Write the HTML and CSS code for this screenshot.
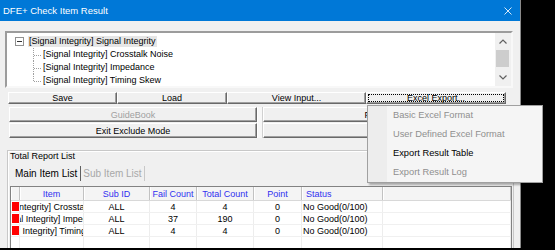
FILE: index.html
```html
<!DOCTYPE html>
<html lang="en">
<head>
  <meta charset="UTF-8" />
  <title>DFE+ Check Item Result</title>
  <link rel="stylesheet" href="styles.css">
</head>
<body>
  <div class="screen">
    <div class="window">
      <div class="titlebar">
        <span>DFE+ Check Item Result</span>
        <svg class="close" width="8" height="8" viewBox="0 0 8 8"><path d="M0.5 0.5L7.5 7.5M7.5 0.5L0.5 7.5" stroke="#d6e8f7" stroke-width="1" /></svg>
      </div>
      <div class="client">
        <div class="tree">
          <ul class="tree-list">
            <li class="root"><span class="expander"></span><span class="node selected">[Signal Integrity] Signal Integrity</span></li>
            <li>
              <ul class="children">
                <li class="child"><span class="node">[Signal Integrity] Crosstalk Noise</span></li>
                <li class="child"><span class="node">[Signal Integrity] Impedance</span></li>
                <li class="child"><span class="node">[Signal Integrity] Timing Skew</span></li>
              </ul>
            </li>
          </ul>
          <div class="scrollbar">
            <div class="arrow"><svg width="8" height="5" viewBox="0 0 8 5"><path d="M0.5 4.5L4 1L7.5 4.5" fill="none" stroke="#606060" stroke-width="1.2" /></svg></div>
            <div class="thumb"></div>
            <div class="track"></div>
            <div class="arrow"><svg width="8" height="5" viewBox="0 0 8 5"><path d="M0.5 0.5L4 4L7.5 0.5" fill="none" stroke="#606060" stroke-width="1.2" /></svg></div>
          </div>
        </div>

        <div class="toolbar">
          <button class="btn">Save</button>
          <button class="btn">Load</button>
          <button class="btn">View Input...</button>
          <button class="btn focused">Excel Export...</button>
        </div>

        <div class="actions">
          <button class="btn disabled">GuideBook</button>
          <div class="splitter"></div>
          <button class="btn">Preview...</button>
          <button class="btn">Exit Exclude Mode</button>
          <button class="btn"></button>
        </div>

        <div class="group">
          <div class="group-label">Total Report List</div>
          <div class="tabs">
            <span class="tab active">Main Item List</span>
            <span class="tab disabled">Sub Item List</span>
          </div>
          <div class="grid">
            <div class="grid-row head">
              <div class="cell"></div>
              <div class="cell">Item</div>
              <div class="cell">Sub ID</div>
              <div class="cell">Fail Count</div>
              <div class="cell">Total Count</div>
              <div class="cell">Point</div>
              <div class="cell left">Status</div>
              <div class="cell"></div>
            </div>
            <div class="grid-row">
              <div class="cell"><span class="mark"></span></div>
              <div class="cell clip"><span>[Signal Integrity] Crosstalk Noise</span></div>
              <div class="cell">ALL</div>
              <div class="cell">4</div>
              <div class="cell">4</div>
              <div class="cell">0</div>
              <div class="cell left">No Good(0/100)</div>
              <div class="cell"></div>
            </div>
            <div class="grid-row">
              <div class="cell"><span class="mark"></span></div>
              <div class="cell clip"><span>[Signal Integrity] Impedance</span></div>
              <div class="cell">ALL</div>
              <div class="cell">37</div>
              <div class="cell">190</div>
              <div class="cell">0</div>
              <div class="cell left">No Good(0/100)</div>
              <div class="cell"></div>
            </div>
            <div class="grid-row">
              <div class="cell"><span class="mark"></span></div>
              <div class="cell clip"><span>[Signal Integrity] Timing Skew</span></div>
              <div class="cell">ALL</div>
              <div class="cell">4</div>
              <div class="cell">4</div>
              <div class="cell">0</div>
              <div class="cell left">No Good(0/100)</div>
              <div class="cell"></div>
            </div>
            <div class="grid-row empty">
              <div class="cell"></div><div class="cell"></div><div class="cell"></div><div class="cell"></div>
              <div class="cell"></div><div class="cell"></div><div class="cell"></div><div class="cell"></div>
            </div>
          </div>
        </div>
      </div>
    </div>

    <div class="menu">
      <div class="menu-item disabled">Basic Excel Format</div>
      <div class="menu-item disabled">User Defined Excel Format</div>
      <div class="menu-item">Export Result Table</div>
      <div class="menu-item disabled">Export Result Log</div>
    </div>
  </div>
</body>
</html>
```

FILE: styles.css
```css
* {
  box-sizing: border-box;
}
body {
  margin: 0;
  background: #000;
  font-family: "Liberation Sans", Arial, sans-serif;
  color: #000;
}
.screen {
  position: relative;
  width: 555px;
  height: 250px;
}
.window {
  width: 521px;
  height: 248px;
  background: #f0f0f0;
  border-right: 1px solid #8a8a8a;
  overflow: hidden;
}
.titlebar {
  height: 21px;
  background: #0078d7;
  color: #fff;
  font-size: 9.5px;
  display: flex;
  align-items: center;
  justify-content: space-between;
  padding: 0 8px 0 3px;
}
.client {
  padding: 10px 0 0 5px;
}

/* tree view */
.tree {
  display: flex;
  width: 508px;
  height: 57px;
  background: #fff;
  border: 2px solid;
  border-color: #9c9c9c #f8f8f8 #f8f8f8 #9c9c9c;
}
.tree-list {
  flex: 1;
  list-style: none;
  margin: 0;
  padding: 2px 0 0 8px;
  overflow: hidden;
  font-size: 9px;
}
.tree-list ul {
  list-style: none;
  margin: 0;
  padding: 0;
}
.root {
  display: flex;
  align-items: center;
  height: 13px;
}
.expander {
  position: relative;
  width: 9px;
  height: 9px;
  border: 1px solid #919191;
  background: #fff;
  margin-right: 4px;
}
.expander::after {
  content: "";
  position: absolute;
  left: 1px;
  top: 3px;
  width: 5px;
  border-top: 1px solid #333;
}
.node {
  line-height: 11px;
  padding: 0 1px;
  white-space: nowrap;
}
.node.selected {
  background: #e6e6e6;
}
.children {
  margin-left: 18px !important;
}
.child {
  position: relative;
  height: 13px;
  display: flex;
  align-items: center;
  padding-left: 9px;
}
.child::before {
  content: "";
  position: absolute;
  left: 0;
  top: 0;
  bottom: 0;
  border-left: 1px dotted #a0a0a0;
}
.child:last-child::before {
  bottom: 50%;
}
.child::after {
  content: "";
  position: absolute;
  left: 1px;
  top: 50%;
  width: 7px;
  border-top: 1px dotted #a0a0a0;
}
.scrollbar {
  width: 16px;
  background: #f0f0f0;
  display: flex;
  flex-direction: column;
}
.arrow {
  height: 17px;
  display: flex;
  align-items: center;
  justify-content: center;
}
.thumb {
  height: 17px;
  margin: 0 2px 0 1px;
  background: #cdcdcd;
}
.track {
  flex: 1;
}

/* buttons */
.btn {
  font-family: inherit;
  font-size: 9px;
  color: #000;
  background: #f0f0f0;
  border: 1px solid;
  border-color: #fff #696969 #696969 #fff;
  box-shadow: inset -1px -1px 0 #a0a0a0;
  padding: 0;
  line-height: 10px;
  white-space: nowrap;
  overflow: hidden;
}
.btn.disabled {
  color: #a0a0a0;
}
.btn.focused {
  outline: 1px dotted #000;
  outline-offset: -3px;
}
.toolbar {
  display: grid;
  grid-template-columns: 109px 110px 139px 140px;
  height: 12px;
  margin: 4px 0 0 3px;
}
.actions {
  display: grid;
  grid-template-columns: 248px 6px 242px;
  grid-template-rows: 15px 15px;
  row-gap: 1px;
  margin: 3px 0 0 4px;
}
.splitter {
  grid-row: span 2;
  background: #f7f7f7;
  border-left: 1px solid #fff;
  border-right: 1px solid #d0d0d0;
}

/* report group */
.group {
  width: 507px;
  height: 110px;
  margin: 12px 0 0 2px;
  border: 1px solid #c8c8c8;
  box-shadow: inset 1px 1px 0 #fff;
}
.group-label {
  font-size: 9px;
  line-height: 11px;
  padding-left: 2px;
}
.tabs {
  display: flex;
  height: 15px;
  margin-top: 4px;
  padding-left: 7px;
  font-size: 10px;
}
.tab {
  line-height: 15px;
  white-space: nowrap;
}
.tab.active {
  padding-right: 3px;
  border-right: 1px solid #606060;
}
.tab.disabled {
  color: #a8a8a8;
  padding: 0 2px 0 2px;
  border-right: 1px solid #c8c8c8;
}
.grid {
  width: 502px;
  margin: 5px 0 0 2px;
  border: 1px solid #828282;
  background: #fff;
  font-size: 9px;
}
.grid-row {
  display: grid;
  grid-template-columns: 9px 64px 66px 47px 57px 48px 81px 1fr;
  height: 12px;
  border-bottom: 1px solid #f0f0f0;
}
.grid-row.head {
  height: 14px;
  background: #f4f4f4;
  border-bottom: 1px solid #d8d8d8;
  color: #3030f0;
}
.cell {
  display: flex;
  align-items: center;
  justify-content: center;
  overflow: hidden;
  white-space: nowrap;
  border-right: 1px solid #ededed;
}
.head .cell {
  border-right: 1px solid #c2c2c2;
  box-shadow: inset 1px 0 0 #fff;
}
.cell.left {
  justify-content: flex-start;
  padding-left: 1px;
}
.head .cell.left {
  padding-left: 4px;
}
.cell.clip span {
  flex-shrink: 0;
}
.mark {
  width: 7px;
  height: 9px;
  background: #f00;
  margin-left: 1px;
}

/* context menu */
.menu {
  position: absolute;
  left: 367px;
  top: 105px;
  width: 176px;
  height: 78px;
  border: 1px solid #a0a0a0;
  background: linear-gradient(to right, #ededed 19px, #f5f5f5 19px);
  box-shadow: 2px 2px 2px rgba(0, 0, 0, 0.3);
  font-size: 9.3px;
}
.menu-item {
  height: 19px;
  line-height: 19px;
  padding-left: 25px;
  white-space: nowrap;
}
.menu-item.disabled {
  color: #8f8f8f;
}
```
